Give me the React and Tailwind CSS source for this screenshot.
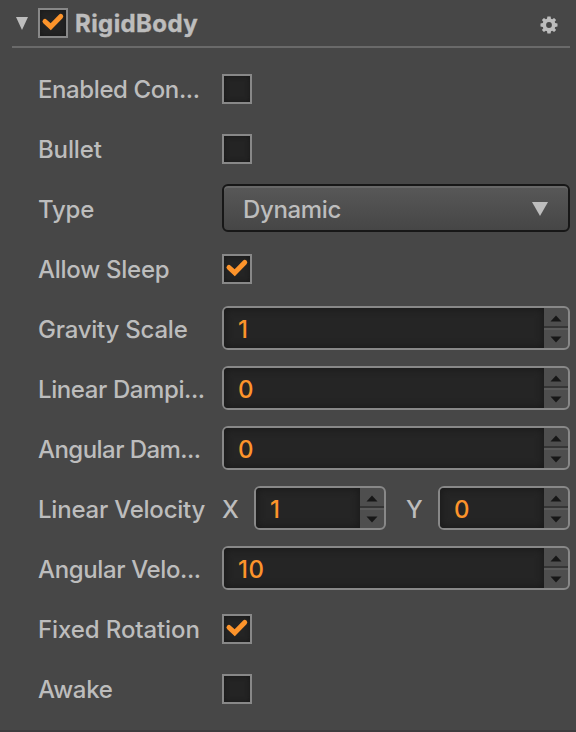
import React from "react";

function Check({ checked }) {
  return (
    <span className="flex size-[30px] shrink-0 items-center justify-center border-2 border-[#888] bg-[#242424] shadow-[inset_0_0_5px_#171717]">
      {checked && (
        <svg width="26" height="26" viewBox="0 0 26 26" fill="none" className="shrink-0">
          <path d="M5 11.5 L10.7 16.7 L20.7 6.4" stroke="#fd942b" strokeWidth="5" strokeLinecap="round" strokeLinejoin="miter" />
        </svg>
      )}
    </span>
  );
}

function NumberField({ value, className }) {
  return (
    <div className={`mb-0.5 flex h-11 overflow-hidden rounded-[6px] border-2 border-[#888] bg-[#4e4e4e] ${className}`}>
      <div className="flex flex-1 items-center bg-[#252525] pl-3.5 pt-1 font-medium tracking-[0.5px] text-[#fd942b] shadow-[inset_0_0_8px_#171717]">{value}</div>
      <div className="flex w-6 flex-col">
        <div className="flex h-[18px] items-center justify-center">
          <svg width="12" height="7" viewBox="0 0 12 7" className="mt-[3px]"><path d="M6 0.5 L11.5 6.5 H0.5 Z" fill="#171717" /></svg>
        </div>
        <div className="h-0.5 bg-[#353535]" />
        <div className="h-0.5 bg-[#5a5a5a]" />
        <div className="flex h-[18px] items-center justify-center">
          <svg width="12" height="7" viewBox="0 0 12 7" className="mt-px"><path d="M0.5 0.5 H11.5 L6 6.5 Z" fill="#171717" /></svg>
        </div>
      </div>
    </div>
  );
}

function Row({ label, tracking = "tracking-[-0.4px]", children }) {
  return (
    <div className="flex h-[60px] items-center">
      <div className={`w-[184px] shrink-0 whitespace-nowrap pt-0.5 ${tracking}`}>{label}</div>
      {children}
    </div>
  );
}

export default function App() {
  return (
    <div className="h-[732px] w-[576px] overflow-hidden bg-[#474747] font-['Inter','Liberation_Sans',sans-serif] text-2xl font-medium text-[#bdbdbd]">
      <header className="ml-3 mr-1.5 flex h-12 items-center border-b-2 border-[#6a6a6a] pl-1 pr-3">
        <svg width="12" height="13" viewBox="0 0 12 13" className="mr-2.5"><path d="M0 0 H12 L6 13 Z" fill="#bdbdbd" /></svg>
        <Check checked />
        <h2 className="ml-[7px] flex-1 pt-0.5 font-bold tracking-[0.4px] [-webkit-text-stroke:0.4px_#bdbdbd]">RigidBody</h2>
        <svg width="18" height="18" viewBox="0 0 18 18" className="mt-1">
          <path fill="#bdbdbd" fillRule="evenodd" d="M7.4 0.5 H10.6 L11 2.8 L12.2 3.3 L14.1 1.9 L16.1 3.9 L14.7 5.8 L15.2 7 L17.5 7.4 V10.6 L15.2 11 L14.7 12.2 L16.1 14.1 L14.1 16.1 L12.2 14.7 L11 15.2 L10.6 17.5 H7.4 L7 15.2 L5.8 14.7 L3.9 16.1 L1.9 14.1 L3.3 12.2 L2.8 11 L0.5 10.6 V7.4 L2.8 7 L3.3 5.8 L1.9 3.9 L3.9 1.9 L5.8 3.3 L7 2.8 Z M9 6.1 A2.9 2.9 0 1 0 9 11.9 A2.9 2.9 0 1 0 9 6.1 Z" />
        </svg>
      </header>
      <main className="h-[682px] pl-[38px] pr-1.5 pt-[11px]">
        <Row label="Enabled Con..."><Check /></Row>
        <Row label="Bullet" tracking="tracking-[-0.15px]"><Check /></Row>
        <Row label="Type" tracking="tracking-[-0.2px]">
          <div className="mb-0.5 flex h-12 w-[348px] items-center justify-between rounded-[6px] border-2 border-[#171717] bg-linear-to-b from-[#585858] to-[#464646] pl-[19px] pr-5 shadow-[inset_0_2px_0_#686868]">
            <span className="pt-1 tracking-[-0.35px]">Dynamic</span>
            <svg width="16" height="14" viewBox="0 0 16 14" className="mt-0.5"><path d="M0 0 H16 L8 14 Z" fill="#bdbdbd" /></svg>
          </div>
        </Row>
        <Row label="Allow Sleep" tracking="tracking-[-0.25px]"><Check checked /></Row>
        <Row label="Gravity Scale" tracking="tracking-[-0.22px]"><NumberField value="1" className="w-[348px]" /></Row>
        <Row label="Linear Dampi..."><NumberField value="0" className="w-[348px]" /></Row>
        <Row label="Angular Dam..." tracking="tracking-[-0.55px]"><NumberField value="0" className="w-[348px]" /></Row>
        <Row label="Linear Velocity" tracking="tracking-[-0.22px]">
          <span className="w-8 pt-0.5">X</span>
          <NumberField value="1" className="w-[132px]" />
          <span className="ml-5 w-8 pt-0.5">Y</span>
          <NumberField value="0" className="w-[132px]" />
        </Row>
        <Row label="Angular Velo..." tracking="tracking-[-0.37px]"><NumberField value="10" className="w-[348px]" /></Row>
        <Row label="Fixed Rotation" tracking="tracking-[-0.1px]"><Check checked /></Row>
        <Row label="Awake" tracking="tracking-[-0.25px]"><Check /></Row>
      </main>
      <div className="h-0.5 bg-[#3e3c3e]" />
    </div>
  );
}
